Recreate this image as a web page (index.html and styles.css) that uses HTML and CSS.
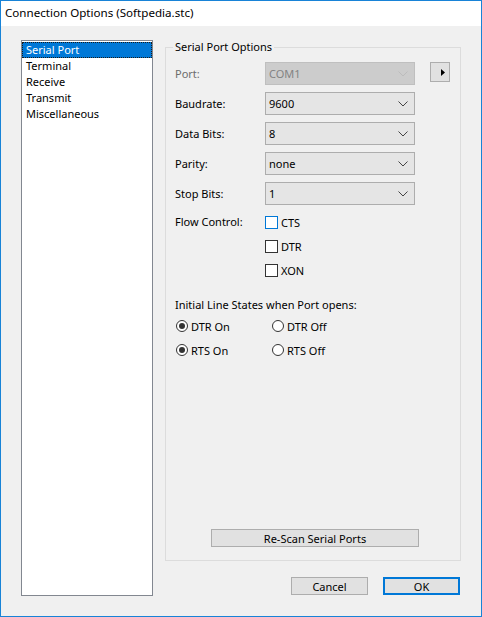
FILE: index.html
```html
<!DOCTYPE html>
<html>
<head>
<meta charset="utf-8">
<link rel="stylesheet" href="styles.css">
</head>
<body>
<div class="window">
  <div class="titlebar">Connection Options (Softpedia.stc)</div>
  <div class="content">
    <div class="listbox">
      <div class="item selected"><span>Serial Port</span></div>
      <div class="item"><span>Terminal</span></div>
      <div class="item"><span>Receive</span></div>
      <div class="item"><span>Transmit</span></div>
      <div class="item"><span>Miscellaneous</span></div>
    </div>
    <div class="right">
      <div class="group">
        <div class="group-title">Serial Port Options</div>
        <div class="row first">
          <div class="label disabled">Port:</div>
          <div class="combo disabled"><span>COM1</span><svg class="chev" width="10" height="6" viewBox="0 0 10 6"><path d="M0.5 0.5 L5 5 L9.5 0.5" fill="none" stroke="#bcbcbc" stroke-width="1"/></svg></div>
          <div class="minibtn"><svg width="4" height="7" viewBox="0 0 4 7"><path d="M0 0 L4 3.5 L0 7 Z" fill="#000"/></svg></div>
        </div>
        <div class="row">
          <div class="label">Baudrate:</div>
          <div class="combo"><span>9600</span><svg class="chev" width="10" height="6" viewBox="0 0 10 6"><path d="M0.5 0.5 L5 5 L9.5 0.5" fill="none" stroke="#444" stroke-width="1"/></svg></div>
        </div>
        <div class="row">
          <div class="label">Data Bits:</div>
          <div class="combo"><span>8</span><svg class="chev" width="10" height="6" viewBox="0 0 10 6"><path d="M0.5 0.5 L5 5 L9.5 0.5" fill="none" stroke="#444" stroke-width="1"/></svg></div>
        </div>
        <div class="row">
          <div class="label">Parity:</div>
          <div class="combo"><span>none</span><svg class="chev" width="10" height="6" viewBox="0 0 10 6"><path d="M0.5 0.5 L5 5 L9.5 0.5" fill="none" stroke="#444" stroke-width="1"/></svg></div>
        </div>
        <div class="row">
          <div class="label">Stop Bits:</div>
          <div class="combo"><span>1</span><svg class="chev" width="10" height="6" viewBox="0 0 10 6"><path d="M0.5 0.5 L5 5 L9.5 0.5" fill="none" stroke="#444" stroke-width="1"/></svg></div>
        </div>
        <div class="flow">
          <div class="label flow-label">Flow Control:</div>
          <div class="checks">
            <div class="check"><span class="box focus"></span>CTS</div>
            <div class="check"><span class="box"></span>DTR</div>
            <div class="check"><span class="box"></span>XON</div>
          </div>
        </div>
        <div class="states-title">Initial Line States when Port opens:</div>
        <div class="radios">
          <div class="radio"><span class="circle on"></span>DTR On</div>
          <div class="radio"><span class="circle"></span>DTR Off</div>
          <div class="radio"><span class="circle on"></span>RTS On</div>
          <div class="radio"><span class="circle"></span>RTS Off</div>
        </div>
        <div class="rescan-wrap"><div class="btn rescan">Re-Scan Serial Ports</div></div>
      </div>
      <div class="buttons">
        <div class="btn">Cancel</div>
        <div class="btn default">OK</div>
      </div>
    </div>
  </div>
</div>
</body>
</html>
```
FILE: styles.css
```css
* { box-sizing: border-box; }
html, body { margin: 0; padding: 0; }
body {
  font-family: "Noto Sans", "Open Sans", sans-serif;
  font-size: 11px;
  color: #000;
  background: #f0f0f0;
}
.window {
  width: 482px;
  height: 617px;
  border: 1px solid #1883d7;
  background: #f0f0f0;
  display: flex;
  flex-direction: column;
}
.titlebar {
  height: 25px;
  background: #fff;
  padding-left: 4px;
  line-height: 24px;
  font-size: 11.6px;
}
.content {
  display: flex;
  padding: 14px 0 0 20px;
}
.listbox {
  width: 132px;
  height: 556px;
  border: 1px solid #828790;
  background: #fff;
  padding: 1px 0 0 0;
}
.item {
  height: 16px;
  line-height: 16px;
  padding-left: 4px;
}
.item.selected {
  background: #0078d7;
  color: #fff;
  border: 1px dotted #1b1b1b;
  padding-left: 3px;
  line-height: 14px;
}
.right {
  margin-left: 12px;
  padding-top: 7px;
  display: flex;
  flex-direction: column;
}
.group {
  width: 296px;
  height: 514px;
  border: 1px solid #dcdcdc;
  padding: 0 0 13px 9px;
  display: flex;
  flex-direction: column;
}
.group-title {
  align-self: flex-start;
  margin: -9px 0 0 -2px;
  padding: 0 2px;
  background: #f0f0f0;
  height: 16px;
  line-height: 16px;
}
.row {
  display: flex;
  align-items: center;
  height: 23px;
  margin-top: 7px;
}
.row.first { margin-top: 7px; }
.label {
  width: 90px;
  flex: none;
}
.label.disabled { color: #6d6d6d; }
.combo {
  width: 150px;
  height: 23px;
  border: 1px solid #adadad;
  background: #e5e5e5;
  display: flex;
  align-items: center;
  justify-content: space-between;
  padding: 0 6px 0 3px;
}
.combo.disabled {
  background: #cccccc;
  border-color: #bfbfbf;
  color: #838383;
}
.minibtn {
  width: 20px;
  height: 20px;
  margin-left: 15px;
  align-self: flex-start;
  border: 1px solid #adadad;
  background: #e1e1e1;
  display: flex;
  align-items: center;
  justify-content: center;
  padding-left: 5px;
}
.flow {
  display: flex;
  margin-top: 5px;
}
.flow-label {
  height: 24px;
  line-height: 24px;
}
.checks {
  display: flex;
  flex-direction: column;
}
.check {
  display: flex;
  align-items: center;
  height: 24px;
}
.box {
  width: 13px;
  height: 13px;
  border: 1px solid #333;
  background: #fff;
  margin-right: 3px;
}
.box.focus { border-color: #0078d7; }
.states-title {
  margin-top: 15px;
  height: 16px;
  line-height: 16px;
}
.radios {
  display: grid;
  grid-template-columns: 96px 100px;
  grid-auto-rows: 24px;
  margin-top: 1px;
}
.radio {
  display: flex;
  align-items: center;
}
.circle {
  width: 12px;
  height: 12px;
  border-radius: 50%;
  border: 1px solid #333;
  background: #fff;
  margin-right: 3px;
  margin-left: 1px;
  display: flex;
  align-items: center;
  justify-content: center;
}
.circle.on::after {
  content: "";
  width: 6px;
  height: 6px;
  border-radius: 50%;
  background: #333;
}
.rescan-wrap {
  margin-top: auto;
  padding-left: 36px;
}
.btn {
  height: 18px;
  border: 1px solid #adadad;
  background: #e1e1e1;
  display: flex;
  align-items: center;
  justify-content: center;
}
.rescan { width: 208px; }
.buttons {
  display: flex;
  justify-content: flex-end;
  gap: 15px;
  margin-top: 16px;
  padding-right: 1px;
}
.buttons .btn { width: 77px; height: 18px; }
.btn.default { border: 2px solid #0078d7; }
```
